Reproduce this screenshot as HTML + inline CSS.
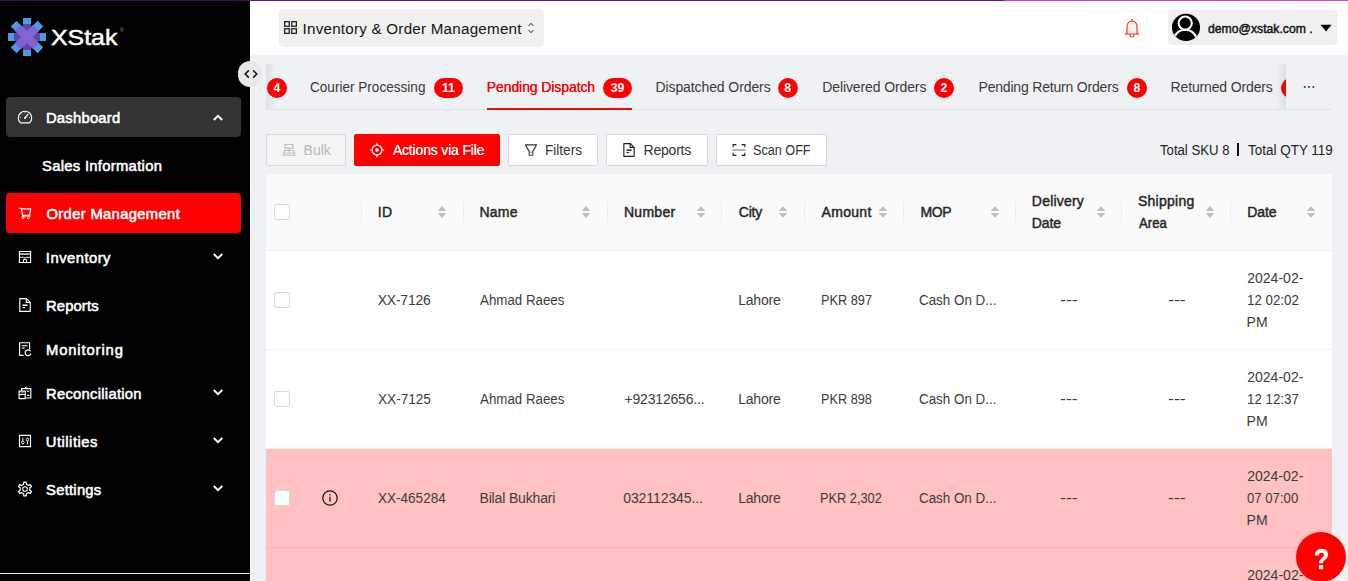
<!DOCTYPE html>
<html lang="en"><head><meta charset="utf-8"><title>XStak - Order Management</title>
<style>
*{box-sizing:border-box;margin:0;padding:0}
html,body{width:1348px;height:581px;overflow:hidden;background:#eff2f5;font-family:"Liberation Sans",sans-serif}
.t{position:absolute;white-space:nowrap;line-height:22px;height:22px}
.abs{position:absolute}
#side{position:absolute;left:0;top:0;width:250px;height:581px;background:#000}
#head{position:absolute;left:250px;top:0;width:1098px;height:55px;background:#fff}
#topline{position:absolute;left:0;top:0;width:1348px;height:1px;background:linear-gradient(90deg,#3d0a5e 0,#3d0a5e 250px,#6a0f8e 250px,#6a0f8e 1003px,#d631d6 1004px,#dc3cdc 100%)}
.mi{position:absolute;left:6px;width:235px;height:40px;border-radius:4px}
.badge{position:absolute;height:20px;border-radius:10px;background:#ff0000;color:#fff;font-size:12.3px;font-weight:700;text-align:center;line-height:21.6px}
.btn{position:absolute;top:134px;height:32px;background:#fff;border:1px solid #d9d9d9;border-radius:2px}
.cb{position:absolute;width:16px;height:16px;background:#fff;border:1px solid #d9d9d9;border-radius:2px}
.sep{position:absolute;width:1px;height:22px;top:201px;background:#ececec}
.row{position:absolute;left:266px;width:1066px;height:99px;background:#fff;border-bottom:1px solid #f0f0f0}
.row.pink{background:#ffc1c1;border-bottom:1px solid #f3b7b7}
svg{position:absolute;overflow:visible}
</style></head><body>
<div id="head"></div><div id="side"></div><div id="topline"></div><svg style="left:8px;top:18px" width="38" height="38" viewBox="-19 -19 38 38">
<g fill="#4a9be0">
<rect x="-4" y="-19" width="8" height="38"/><rect x="-19" y="-4" width="38" height="8"/>
<g transform="rotate(45)"><rect x="-4" y="-19" width="8" height="38"/><rect x="-19" y="-4" width="38" height="8"/></g>
</g>
<g fill="#5b49a3"><rect x="-4" y="-13" width="8" height="26"/><rect x="-13" y="-4" width="26" height="8"/></g>
<polygon fill="#8362d6" transform="rotate(45)" points="-4.25,-12.9 4.25,-12.9 4.25,-4.25 12.9,-4.25 12.9,4.25 4.25,4.25 4.25,12.9 -4.25,12.9 -4.25,4.25 -12.9,4.25 -12.9,-4.25 -4.25,-4.25"/>
</svg><span class="t" id="t0" style="left:50.6px;top:27.0px;font-size:22px;font-weight:400;color:#fff;-webkit-text-stroke:0.5px #fff;line-height:22px;transform:scaleX(1.13);transform-origin:0 50%;">XStak</span><span class="t" style="left:120px;top:27px;font-size:5px;color:#999;line-height:6px;height:6px">®</span><div class="mi" style="top:97px;background:#333"></div><div class="mi" style="top:193px;background:#ff0000"></div><span class="t" id="t1" style="left:45.96px;top:106.6px;font-size:14.8px;font-weight:400;color:#fff;-webkit-text-stroke:0.55px #fff;letter-spacing:0.234px;">Dashboard</span><span class="t" id="t2" style="left:42.05px;top:154.8px;font-size:14.8px;font-weight:400;color:#fff;-webkit-text-stroke:0.55px #fff;letter-spacing:0.293px;">Sales Information</span><span class="t" id="t3" style="left:46.5px;top:202.6px;font-size:14.8px;font-weight:400;color:#fff;-webkit-text-stroke:0.55px #fff;letter-spacing:0.329px;">Order Management</span><span class="t" id="t4" style="left:45.86px;top:246.60000000000002px;font-size:14.8px;font-weight:400;color:#fff;-webkit-text-stroke:0.55px #fff;letter-spacing:0.466px;">Inventory</span><span class="t" id="t5" style="left:45.96px;top:294.6px;font-size:14.8px;font-weight:400;color:#fff;-webkit-text-stroke:0.55px #fff;letter-spacing:0.136px;">Reports</span><span class="t" id="t6" style="left:45.97px;top:338.6px;font-size:14.8px;font-weight:400;color:#fff;-webkit-text-stroke:0.55px #fff;letter-spacing:0.873px;">Monitoring</span><span class="t" id="t7" style="left:45.96px;top:382.6px;font-size:14.8px;font-weight:400;color:#fff;-webkit-text-stroke:0.55px #fff;letter-spacing:0.266px;">Reconciliation</span><span class="t" id="t8" style="left:45.79px;top:430.6px;font-size:14.8px;font-weight:400;color:#fff;-webkit-text-stroke:0.55px #fff;letter-spacing:0.491px;">Utilities</span><span class="t" id="t9" style="left:46.05px;top:478.6px;font-size:14.8px;font-weight:400;color:#fff;-webkit-text-stroke:0.55px #fff;letter-spacing:0.246px;">Settings</span><svg style="left:218px;top:117.5px" width="1" height="1"><path d="M-4.2 2 L0 -2.2 L4.2 2" fill="none" stroke="#fff" stroke-width="1.9"/></svg><svg style="left:218px;top:255.7px" width="1" height="1"><path d="M-4.2 -2 L0 2.2 L4.2 -2" fill="none" stroke="#fff" stroke-width="1.9"/></svg><svg style="left:218px;top:391.7px" width="1" height="1"><path d="M-4.2 -2 L0 2.2 L4.2 -2" fill="none" stroke="#fff" stroke-width="1.9"/></svg><svg style="left:218px;top:439.7px" width="1" height="1"><path d="M-4.2 -2 L0 2.2 L4.2 -2" fill="none" stroke="#fff" stroke-width="1.9"/></svg><svg style="left:218px;top:487.7px" width="1" height="1"><path d="M-4.2 -2 L0 2.2 L4.2 -2" fill="none" stroke="#fff" stroke-width="1.9"/></svg><div class="abs" style="left:0;top:573px;width:250px;height:1px;background:#e6e6ee"></div><div class="abs" style="left:250px;top:55px;width:1px;height:526px;background:#fbfcfd"></div><div class="abs" style="left:238px;top:61px;width:24px;height:26px;border-radius:13px;background:#e8e8e8"></div><svg style="left:250.8px;top:74px" width="1" height="1"><path d="M-2.2 -3.6 L-5.8 0 L-2.2 3.6 M2.2 -3.6 L5.8 0 L2.2 3.6" fill="none" stroke="#111" stroke-width="1.5"/></svg><div class="abs" style="left:279px;top:9px;width:265px;height:38px;border-radius:5px;background:#f0f0f0"></div><svg style="left:284px;top:21px" width="13" height="13" viewBox="0 0 13 13" fill="none" stroke="#222" stroke-width="1.3">
<rect x=".65" y=".65" width="4.6" height="4.6"/><rect x="7.75" y=".65" width="4.6" height="4.6"/><rect x=".65" y="7.75" width="4.6" height="4.6"/><rect x="7.75" y="7.75" width="4.6" height="4.6"/></svg><span class="t" id="t10" style="left:302.53px;top:18.2px;font-size:15.2px;font-weight:400;color:#141414;letter-spacing:0.230px;">Inventory &amp; Order Management</span><svg style="left:530.6px;top:28.1px" width="1" height="1"><path d="M-2.5 -2 L0 -4.7 L2.5 -2 M-2.5 2 L0 4.7 L2.5 2" fill="none" stroke="#222" stroke-width="1"/></svg><svg style="left:1132px;top:19px" width="1" height="1" fill="none" stroke="#ff4a2f" stroke-width="1.35">
<path d="M-5 15 L-5 8 C-5 4.2 -2.9 2.1 0 2.1 C2.9 2.1 5 4.2 5 8 L5 15" fill="#fff1ee"/>
<path d="M-7 15.1 L7 15.1"/><path d="M0 0 L0 2.2" stroke-width="1.5"/><path d="M-1.9 16.1 A1.9 1.9 0 0 0 1.9 16.1" stroke-width="1.2"/>
</svg><div class="abs" style="left:1168px;top:10px;width:169px;height:35px;border-radius:4px;background:#f0f0f0"></div><svg style="left:1172.2px;top:13.3px" width="28" height="28" viewBox="0 0 28 28"><defs><clipPath id="av"><ellipse cx="14" cy="14.4" rx="14" ry="13.55"/></clipPath></defs>
<ellipse cx="14" cy="14.4" rx="14.05" ry="13.6" fill="#000"/>
<g clip-path="url(#av)" fill="none" stroke="#fff" stroke-width="2.1"><circle cx="13.2" cy="10.1" r="6.6"/><circle cx="13.2" cy="28.6" r="11.8"/></g></svg><span class="t" id="t11" style="left:1207.74px;top:18.0px;font-size:13px;font-weight:400;color:#111;-webkit-text-stroke:0.45px #111;transform:scaleX(0.9393);transform-origin:0 50%;">demo@xstak.com .</span><svg style="left:1326px;top:27.5px" width="1" height="1"><path d="M-5.5 -3.2 L5.5 -3.2 L0 3.4 Z" fill="#000"/></svg><div class="abs" style="left:266px;top:109px;width:1066px;height:1px;background:#dfe2e5"></div><div class="abs" style="left:266px;top:64px;width:10px;height:45px;background:linear-gradient(90deg,rgba(0,0,0,.075),rgba(0,0,0,0))"></div><div class="abs" style="left:1276px;top:64px;width:10px;height:45px;background:linear-gradient(270deg,rgba(0,0,0,.075),rgba(0,0,0,0))"></div><div class="badge" style="left:267px;top:78px;width:20px">4</div><span class="t" id="t12" style="left:310.48px;top:76.0px;font-size:14px;font-weight:400;color:#3a3a3a;transform:scaleX(0.9697);transform-origin:0 50%;">Courier Processing</span><div class="badge" style="left:433.75px;top:78px;width:29.25px">11</div><span class="t" id="t13" style="left:486.82px;top:76.0px;font-size:14px;font-weight:400;color:#ff0000;letter-spacing:-0.096px;text-shadow:0 0 .3px #ff0000;">Pending Dispatch</span><div class="badge" style="left:603px;top:78px;width:29px">39</div><span class="t" id="t14" style="left:655.52px;top:76.0px;font-size:14px;font-weight:400;color:#3a3a3a;letter-spacing:-0.100px;">Dispatched Orders</span><div class="badge" style="left:777.75px;top:78px;width:20px">8</div><span class="t" id="t15" style="left:822.23px;top:76.0px;font-size:14px;font-weight:400;color:#3a3a3a;letter-spacing:-0.107px;">Delivered Orders</span><div class="badge" style="left:933.75px;top:78px;width:20.25px">2</div><span class="t" id="t16" style="left:978.52px;top:76.0px;font-size:14px;font-weight:400;color:#3a3a3a;letter-spacing:-0.190px;">Pending Return Orders</span><div class="badge" style="left:1127px;top:78px;width:20px">8</div><span class="t" id="t17" style="left:1170.52px;top:76.0px;font-size:14px;font-weight:400;color:#3a3a3a;letter-spacing:-0.140px;">Returned Orders</span><div class="abs" style="left:1281px;top:78px;width:5px;height:20px;overflow:hidden"><div style="width:20px;height:20px;border-radius:10px;background:#ff0000"></div></div><div class="abs" style="left:487px;top:108px;width:145px;height:2px;background:#ff0000"></div><svg style="left:1309px;top:87px" width="1" height="1"><g fill="#333"><circle cx="-4.3" cy="0" r="1"/><circle cx="0" cy="0" r="1"/><circle cx="4.3" cy="0" r="1"/></g></svg><div class="btn" style="left:266px;width:80px;background:#f5f5f5"></div><div class="btn" style="left:354px;width:146px;background:#ff0000;border-color:#ff0000"></div><div class="btn" style="left:508px;width:90px"></div><div class="btn" style="left:606px;width:102px"></div><div class="btn" style="left:716px;width:111px"></div><span class="t" id="t18" style="left:303.53px;top:139.0px;font-size:14px;font-weight:400;color:#b8b8b8;letter-spacing:0.027px;">Bulk</span><span class="t" id="t19" style="left:392.89px;top:139.0px;font-size:14px;font-weight:400;color:#fff;letter-spacing:-0.171px;text-shadow:0 0 .4px #fff;">Actions via File</span><span class="t" id="t20" style="left:545.42px;top:139.0px;font-size:14px;font-weight:400;color:#333;transform:scaleX(0.9697);transform-origin:0 50%;">Filters</span><span class="t" id="t21" style="left:643.56px;top:139.0px;font-size:14px;font-weight:400;color:#333;letter-spacing:-0.221px;">Reports</span><span class="t" id="t22" style="left:753.02px;top:139.0px;font-size:14px;font-weight:400;color:#333;transform:scaleX(0.9023);transform-origin:0 50%;">Scan OFF</span><span class="t" id="t23" style="left:1160px;top:139.0px;font-size:14px;font-weight:400;color:#222;transform:scaleX(0.9398);transform-origin:0 50%;">Total SKU 8</span><div class="abs" style="left:1236.7px;top:143px;width:2.5px;height:13px;background:#111"></div><span class="t" id="t24" style="left:1248.2px;top:139.0px;font-size:14px;font-weight:400;color:#222;transform:scaleX(0.9620);transform-origin:0 50%;">Total QTY 119</span><div class="abs" style="left:266px;top:174px;width:1066px;height:77px;background:#fafafa;border-bottom:1px solid #f0f0f0"></div><div class="row" style="top:251px"></div><div class="row" style="top:350px"></div><div class="row pink" style="top:449px"></div><div class="row pink" style="top:548px"></div><div class="sep" style="left:361px"></div><div class="sep" style="left:463px"></div><div class="sep" style="left:607px"></div><div class="sep" style="left:721px"></div><div class="sep" style="left:804px"></div><div class="sep" style="left:903px"></div><div class="sep" style="left:1015px"></div><div class="sep" style="left:1121px"></div><div class="sep" style="left:1230px"></div><span class="t" id="t25" style="left:377.81px;top:201.2px;font-size:14px;font-weight:400;color:#262626;-webkit-text-stroke:0.45px #262626;letter-spacing:0.414px;">ID</span><span class="t" id="t26" style="left:479.48px;top:201.2px;font-size:14px;font-weight:400;color:#262626;-webkit-text-stroke:0.45px #262626;letter-spacing:0.247px;">Name</span><span class="t" id="t27" style="left:623.89px;top:201.2px;font-size:14px;font-weight:400;color:#262626;-webkit-text-stroke:0.45px #262626;letter-spacing:0.312px;">Number</span><span class="t" id="t28" style="left:738.77px;top:201.2px;font-size:14px;font-weight:400;color:#262626;-webkit-text-stroke:0.45px #262626;letter-spacing:-0.214px;">City</span><span class="t" id="t29" style="left:821.6px;top:201.2px;font-size:14px;font-weight:400;color:#262626;-webkit-text-stroke:0.45px #262626;letter-spacing:0.287px;">Amount</span><span class="t" id="t30" style="left:920.51px;top:201.2px;font-size:14px;font-weight:400;color:#262626;-webkit-text-stroke:0.45px #262626;letter-spacing:-0.409px;">MOP</span><span class="t" id="t31" style="left:1031.86px;top:190.3px;font-size:14px;font-weight:400;color:#262626;-webkit-text-stroke:0.45px #262626;letter-spacing:0.205px;">Delivery</span><span class="t" id="t32" style="left:1031.86px;top:211.6px;font-size:14px;font-weight:400;color:#262626;-webkit-text-stroke:0.45px #262626;letter-spacing:-0.105px;">Date</span><span class="t" id="t33" style="left:1137.99px;top:190.3px;font-size:14px;font-weight:400;color:#262626;-webkit-text-stroke:0.45px #262626;letter-spacing:0.257px;">Shipping</span><span class="t" id="t34" style="left:1138.8px;top:211.6px;font-size:14px;font-weight:400;color:#262626;-webkit-text-stroke:0.45px #262626;transform:scaleX(0.9416);transform-origin:0 50%;">Area</span><span class="t" id="t35" style="left:1247.29px;top:201.2px;font-size:14px;font-weight:400;color:#262626;-webkit-text-stroke:0.45px #262626;letter-spacing:-0.082px;">Date</span><svg style="left:442.3px;top:212.1px" width="1" height="1"><path d="M-4.3 -1.1 L0 -5.9 L4.3 -1.1 Z M-4.3 1.1 L0 5.9 L4.3 1.1 Z" fill="#bfbfbf"/></svg><svg style="left:586.3px;top:212.1px" width="1" height="1"><path d="M-4.3 -1.1 L0 -5.9 L4.3 -1.1 Z M-4.3 1.1 L0 5.9 L4.3 1.1 Z" fill="#bfbfbf"/></svg><svg style="left:700.5px;top:212.1px" width="1" height="1"><path d="M-4.3 -1.1 L0 -5.9 L4.3 -1.1 Z M-4.3 1.1 L0 5.9 L4.3 1.1 Z" fill="#bfbfbf"/></svg><svg style="left:783.3px;top:212.1px" width="1" height="1"><path d="M-4.3 -1.1 L0 -5.9 L4.3 -1.1 Z M-4.3 1.1 L0 5.9 L4.3 1.1 Z" fill="#bfbfbf"/></svg><svg style="left:882.5px;top:212.1px" width="1" height="1"><path d="M-4.3 -1.1 L0 -5.9 L4.3 -1.1 Z M-4.3 1.1 L0 5.9 L4.3 1.1 Z" fill="#bfbfbf"/></svg><svg style="left:994.5px;top:212.1px" width="1" height="1"><path d="M-4.3 -1.1 L0 -5.9 L4.3 -1.1 Z M-4.3 1.1 L0 5.9 L4.3 1.1 Z" fill="#bfbfbf"/></svg><svg style="left:1100.5px;top:212.1px" width="1" height="1"><path d="M-4.3 -1.1 L0 -5.9 L4.3 -1.1 Z M-4.3 1.1 L0 5.9 L4.3 1.1 Z" fill="#bfbfbf"/></svg><svg style="left:1209.5px;top:212.1px" width="1" height="1"><path d="M-4.3 -1.1 L0 -5.9 L4.3 -1.1 Z M-4.3 1.1 L0 5.9 L4.3 1.1 Z" fill="#bfbfbf"/></svg><svg style="left:1310.6px;top:212.1px" width="1" height="1"><path d="M-4.3 -1.1 L0 -5.9 L4.3 -1.1 Z M-4.3 1.1 L0 5.9 L4.3 1.1 Z" fill="#bfbfbf"/></svg><div class="cb" style="left:274px;top:204px"></div><div class="cb" style="left:274px;top:292px"></div><div class="cb" style="left:274px;top:391px"></div><div class="cb" style="left:274px;top:490px"></div><span class="t" id="t36" style="left:377.78px;top:289.0px;font-size:14px;font-weight:400;color:#3c3c3c;letter-spacing:-0.249px;">XX-7126</span><span class="t" id="t37" style="left:480px;top:289.0px;font-size:14px;font-weight:400;color:#3c3c3c;transform:scaleX(0.9513);transform-origin:0 50%;">Ahmad Raees</span><span class="t" id="t38" style="left:738.23px;top:289.0px;font-size:14px;font-weight:400;color:#3c3c3c;letter-spacing:-0.220px;">Lahore</span><span class="t" id="t39" style="left:820.75px;top:289.0px;font-size:14px;font-weight:400;color:#3c3c3c;transform:scaleX(0.9094);transform-origin:0 50%;">PKR 897</span><span class="t" id="t40" style="left:919.48px;top:289.0px;font-size:14px;font-weight:400;color:#3c3c3c;transform:scaleX(0.9562);transform-origin:0 50%;">Cash On D...</span><span class="t" id="t41" style="left:1060.28px;top:289.0px;font-size:14px;font-weight:400;color:#3c3c3c;transform:scaleX(1.2699);transform-origin:0 50%;">---</span><span class="t" id="t42" style="left:1168.14px;top:289.0px;font-size:14px;font-weight:400;color:#3c3c3c;transform:scaleX(1.2712);transform-origin:0 50%;">---</span><span class="t" id="t43" style="left:1247.24px;top:267.0px;font-size:14px;font-weight:400;color:#3c3c3c;letter-spacing:0.010px;">2024-02-</span><span class="t" id="t44" style="left:1247.43px;top:289.0px;font-size:14px;font-weight:400;color:#3c3c3c;transform:scaleX(0.9522);transform-origin:0 50%;">12 02:02</span><span class="t" id="t45" style="left:1246.56px;top:311.0px;font-size:14px;font-weight:400;color:#3c3c3c;letter-spacing:0.136px;">PM</span><span class="t" id="t46" style="left:377.99px;top:388.0px;font-size:14px;font-weight:400;color:#3c3c3c;transform:scaleX(0.9717);transform-origin:0 50%;">XX-7125</span><span class="t" id="t47" style="left:480px;top:388.0px;font-size:14px;font-weight:400;color:#3c3c3c;transform:scaleX(0.9513);transform-origin:0 50%;">Ahmad Raees</span><span class="t" id="t48" style="left:624.44px;top:388.0px;font-size:14px;font-weight:400;color:#3c3c3c;letter-spacing:-0.174px;">+92312656...</span><span class="t" id="t49" style="left:738.23px;top:388.0px;font-size:14px;font-weight:400;color:#3c3c3c;letter-spacing:-0.220px;">Lahore</span><span class="t" id="t50" style="left:820.75px;top:388.0px;font-size:14px;font-weight:400;color:#3c3c3c;transform:scaleX(0.9090);transform-origin:0 50%;">PKR 898</span><span class="t" id="t51" style="left:919.48px;top:388.0px;font-size:14px;font-weight:400;color:#3c3c3c;transform:scaleX(0.9562);transform-origin:0 50%;">Cash On D...</span><span class="t" id="t52" style="left:1060.28px;top:388.0px;font-size:14px;font-weight:400;color:#3c3c3c;transform:scaleX(1.2699);transform-origin:0 50%;">---</span><span class="t" id="t53" style="left:1168.14px;top:388.0px;font-size:14px;font-weight:400;color:#3c3c3c;transform:scaleX(1.2712);transform-origin:0 50%;">---</span><span class="t" id="t54" style="left:1247.24px;top:366.0px;font-size:14px;font-weight:400;color:#3c3c3c;letter-spacing:0.010px;">2024-02-</span><span class="t" id="t55" style="left:1247.43px;top:388.0px;font-size:14px;font-weight:400;color:#3c3c3c;transform:scaleX(0.9522);transform-origin:0 50%;">12 12:37</span><span class="t" id="t56" style="left:1246.56px;top:410.0px;font-size:14px;font-weight:400;color:#3c3c3c;letter-spacing:0.136px;">PM</span><span class="t" id="t57" style="left:377.87px;top:487.0px;font-size:14px;font-weight:400;color:#3c3c3c;transform:scaleX(0.9666);transform-origin:0 50%;">XX-465284</span><span class="t" id="t58" style="left:479.48px;top:487.0px;font-size:14px;font-weight:400;color:#3c3c3c;letter-spacing:-0.156px;">Bilal Bukhari</span><span class="t" id="t59" style="left:623.19px;top:487.0px;font-size:14px;font-weight:400;color:#3c3c3c;letter-spacing:-0.081px;">032112345...</span><span class="t" id="t60" style="left:738.19px;top:487.0px;font-size:14px;font-weight:400;color:#3c3c3c;letter-spacing:-0.218px;">Lahore</span><span class="t" id="t61" style="left:820.23px;top:487.0px;font-size:14px;font-weight:400;color:#3c3c3c;transform:scaleX(0.9126);transform-origin:0 50%;">PKR 2,302</span><span class="t" id="t62" style="left:919.36px;top:487.0px;font-size:14px;font-weight:400;color:#3c3c3c;transform:scaleX(0.9560);transform-origin:0 50%;">Cash On D...</span><span class="t" id="t63" style="left:1060.35px;top:487.0px;font-size:14px;font-weight:400;color:#3c3c3c;transform:scaleX(1.2695);transform-origin:0 50%;">---</span><span class="t" id="t64" style="left:1168.1px;top:487.0px;font-size:14px;font-weight:400;color:#3c3c3c;transform:scaleX(1.2708);transform-origin:0 50%;">---</span><span class="t" id="t65" style="left:1247.2px;top:465.0px;font-size:14px;font-weight:400;color:#3c3c3c;letter-spacing:0.010px;">2024-02-</span><span class="t" id="t66" style="left:1247.36px;top:487.0px;font-size:14px;font-weight:400;color:#3c3c3c;transform:scaleX(0.9402);transform-origin:0 50%;">07 07:00</span><span class="t" id="t67" style="left:1246.52px;top:509.0px;font-size:14px;font-weight:400;color:#3c3c3c;letter-spacing:0.209px;">PM</span><span class="t" id="t68" style="left:1247.24px;top:564.0px;font-size:14px;font-weight:400;color:#3c3c3c;letter-spacing:0.010px;">2024-02-</span><svg style="left:330px;top:498px" width="1" height="1"><circle r="7.2" fill="none" stroke="#111" stroke-width="1.2"/><rect x="-.6" y="-1.3" width="1.2" height="5" fill="#111"/><rect x="-.6" y="-4" width="1.2" height="1.4" fill="#111"/></svg><div class="abs" style="left:1296px;top:532px;width:50px;height:50px;border-radius:25px;background:#ff0000"></div><span class="t" id="t69" style="left:1314px;top:547.6px;font-size:29.5px;font-weight:700;color:#fff;line-height:30px;height:30px;margin-top:-4px;transform:scaleX(.84);transform-origin:0 50%;-webkit-text-stroke:.4px #fff;">?</span><svg style="left:25.2px;top:117.1px" width="1" height="1" ><g fill="none" stroke="#fff" stroke-width="1.15"><path d="M-4.6 5.8 A6.7 6.7 0 1 1 4.6 5.8 Z" stroke-linejoin="round"/><path d="M0 1 L3.1 -2.9" stroke-width="1.3"/><path d="M0 -4.6 L0 -3.6 M-3.5 -3.2 L-2.8 -2.5 M-5 .3 L-4 .3 M5 .3 L4 .3" stroke-width=".9"/></g><circle cx="0" cy="1" r="1.1" fill="#fff"/></svg><svg style="left:24.9px;top:213.2px" width="1" height="1" ><g fill="none" stroke="#fff" stroke-width="1.15"><path d="M-6.1 -4.8 L-3.9 -4.8 L-2.2 2.4 L4.6 2.4 L5.7 -4.1 L-3.6 -4.1" stroke-linejoin="round"/><path d="M-3 3 L5.6 3" stroke-width="1"/><circle cx="-1.9" cy="4.6" r="1.1" stroke-width=".9"/><circle cx="3.4" cy="4.6" r="1.1" stroke-width=".9"/></g></svg><svg style="left:25px;top:257px" width="1" height="1" ><g fill="none" stroke="#fff" stroke-width="1.15"><path d="M-5.6 -5.5 L5.6 -5.5 L5.6 5.5 L-5.6 5.5 Z"/><path d="M-5.6 -2.9 L5.6 -2.9" stroke-width="1.3"/><path d="M-5.6 -1.6 C-5.6 1 -2.4 1.2 -1.9 -.2 C-1.2 1.4 1.2 1.4 1.9 -.2 C2.4 1.2 5.6 1 5.6 -1.6" stroke-width="1"/><path d="M-1.6 5.5 L-1.6 2.4 L1.6 2.4 L1.6 5.5" stroke-width="1"/></g></svg><svg style="left:25px;top:305px" width="1" height="1" ><g fill="none" stroke="#fff" stroke-width="1.15" transform="scale(1.0)"><path d="M-5.2 -6.4 L1.4 -6.4 L5.2 -2.6 L5.2 6.4 L-5.2 6.4 Z" stroke-linejoin="round"/><path d="M1.2 -6.2 L1.2 -2.6 L5 -2.6" /><path d="M-2.6 .2 L2.6 .2" stroke-width="1.5"/><path d="M-2.6 2.6 L.2 2.6" stroke-width="1"/></g></svg><svg style="left:25.2px;top:349px" width="1" height="1" ><g fill="none" stroke="#fff" stroke-width="1.15"><path d="M-1.4 6.3 L-5.4 6.3 L-5.4 -6.3 L4.6 -6.3 L4.6 .2" stroke-linejoin="round"/><path d="M-3.3 -3.3 L2.6 -3.3" stroke-width="1.1"/><path d="M-3.3 -1 L-.2 -1" stroke-width="1.1"/><path d="M5.6 2.2 A2.9 2.9 0 1 0 5.9 4.6" stroke-width="1.3"/></g></svg><svg style="left:25.1px;top:393px" width="1" height="1" ><g fill="none" stroke="#fff" stroke-width="1.15"><path d="M-3.4 -2.2 L-3.4 -4.4 L5.8 -4.4 L5.8 5 L.6 5" stroke-linejoin="round"/><path d="M-5.9 -1.9 L.2 -1.9 L.2 5.6 L-5.9 5.6 Z" stroke-linejoin="round"/><path d="M-5.9 1.6 L.2 1.6" stroke-width="1"/><path d="M-4.4 -.2 L-1.3 -.2" stroke-width="1.2" opacity=".6"/><path d="M-.4 -4.6 L1.2 -6.2 L2.8 -4.6" stroke-width="1"/><path d="M2 -2.6 L3 -.9 L4.2 -2.6" stroke-width=".9"/></g><path d="M1.8 2.9 A1.4 1.4 0 0 1 4.6 2.9 Z" fill="#fff"/></svg><svg style="left:25px;top:441px" width="1" height="1" ><g fill="none" stroke="#fff" stroke-width="1.15"><path d="M-5.5 -5.6 L5.5 -5.6 L5.5 5.6 L-5.5 5.6 Z"/><path d="M-2.2 -3.4 L-2.2 3.4 M2.4 -3.4 L2.4 3.4" stroke-width="1"/><circle cx="-2.2" cy="1.5" r="1.3" fill="#000" stroke-width=".9"/><circle cx="2.4" cy="-1.3" r="1.3" fill="#000" stroke-width=".9"/></g></svg><svg style="left:25px;top:489px" width="1" height="1" ><g fill="none" stroke="#fff" stroke-width="1.15"><path d="M-1.38 -4.81 L-1.22 -6.89 L1.22 -6.89 L1.38 -4.81 L3.47 -3.60 L5.36 -4.50 L6.58 -2.39 L4.85 -1.21 L4.85 1.21 L6.58 2.39 L5.36 4.50 L3.47 3.60 L1.38 4.81 L1.22 6.89 L-1.22 6.89 L-1.38 4.81 L-3.47 3.60 L-5.36 4.50 L-6.58 2.39 L-4.85 1.21 L-4.85 -1.21 L-6.58 -2.39 L-5.36 -4.50 L-3.47 -3.60 Z" stroke-linejoin="round" stroke-width="1.2"/><circle r="2.3" stroke-width="1.1"/></g></svg><svg style="left:289px;top:150px" width="1" height="1" ><g fill="none" stroke="#bdbdbd" stroke-width="1.1"><path d="M-4 -5.5 L4 -5.5 L4 -1.9 L-4 -1.9 Z"/><path d="M0 -1.9 L0 2.6 M-4.6 2.8 L-4.6 .5 L4.6 .5 L4.6 2.8"/><rect x="-5.8" y="2.9" width="2.5" height="2.6" stroke-width=".9"/><rect x="-1.25" y="2.9" width="2.5" height="2.6" stroke-width=".9"/><rect x="3.3" y="2.9" width="2.5" height="2.6" stroke-width=".9"/></g></svg><svg style="left:377px;top:150px" width="1" height="1" ><g fill="none" stroke="#fff" stroke-width="1.15"><circle r="4.9" stroke-width="1.3"/><path d="M0 -7.2 L0 -4.9 M0 7.2 L0 4.9 M-7.2 0 L-4.9 0 M7.2 0 L4.9 0" stroke-width="1.2"/></g><circle r="1.8" fill="#fff"/></svg><svg style="left:530.8px;top:149.9px" width="1" height="1" ><g fill="none" stroke="#333" stroke-width="1.15"><path d="M-5.6 -5.2 L5.6 -5.2 L1.7 1.6 L1.7 5.2 L-1.7 5.2 L-1.7 1.6 Z" stroke-linejoin="round"/></g><path d="M-1.7 2.2 L1.7 2.2 L1.7 5.2 L-1.7 5.2 Z" fill="none" stroke="#777" stroke-width="1.1"/></svg><svg style="left:628.7px;top:150.2px" width="1" height="1" ><g fill="none" stroke="#222" stroke-width="1.15" transform="scale(0.99)"><path d="M-5.2 -6.4 L1.4 -6.4 L5.2 -2.6 L5.2 6.4 L-5.2 6.4 Z" stroke-linejoin="round"/><path d="M1.2 -6.2 L1.2 -2.6 L5 -2.6" /><path d="M-2.6 .2 L2.6 .2" stroke-width="1.5"/><path d="M-2.6 2.6 L.2 2.6" stroke-width="1"/></g></svg><svg style="left:739px;top:150px" width="1" height="1" ><g fill="none" stroke="#222" stroke-width="1.1"><path d="M-5.8 -2.8 L-5.8 -5.4 L-2.6 -5.4 M2.6 -5.4 L5.8 -5.4 L5.8 -2.8 M5.8 2.8 L5.8 5.4 L2.6 5.4 M-2.6 5.4 L-5.8 5.4 L-5.8 2.8"/></g><path d="M-6.5 0 L6.5 0" stroke="#8c8c8c" stroke-width="1.3"/></svg></body></html>
